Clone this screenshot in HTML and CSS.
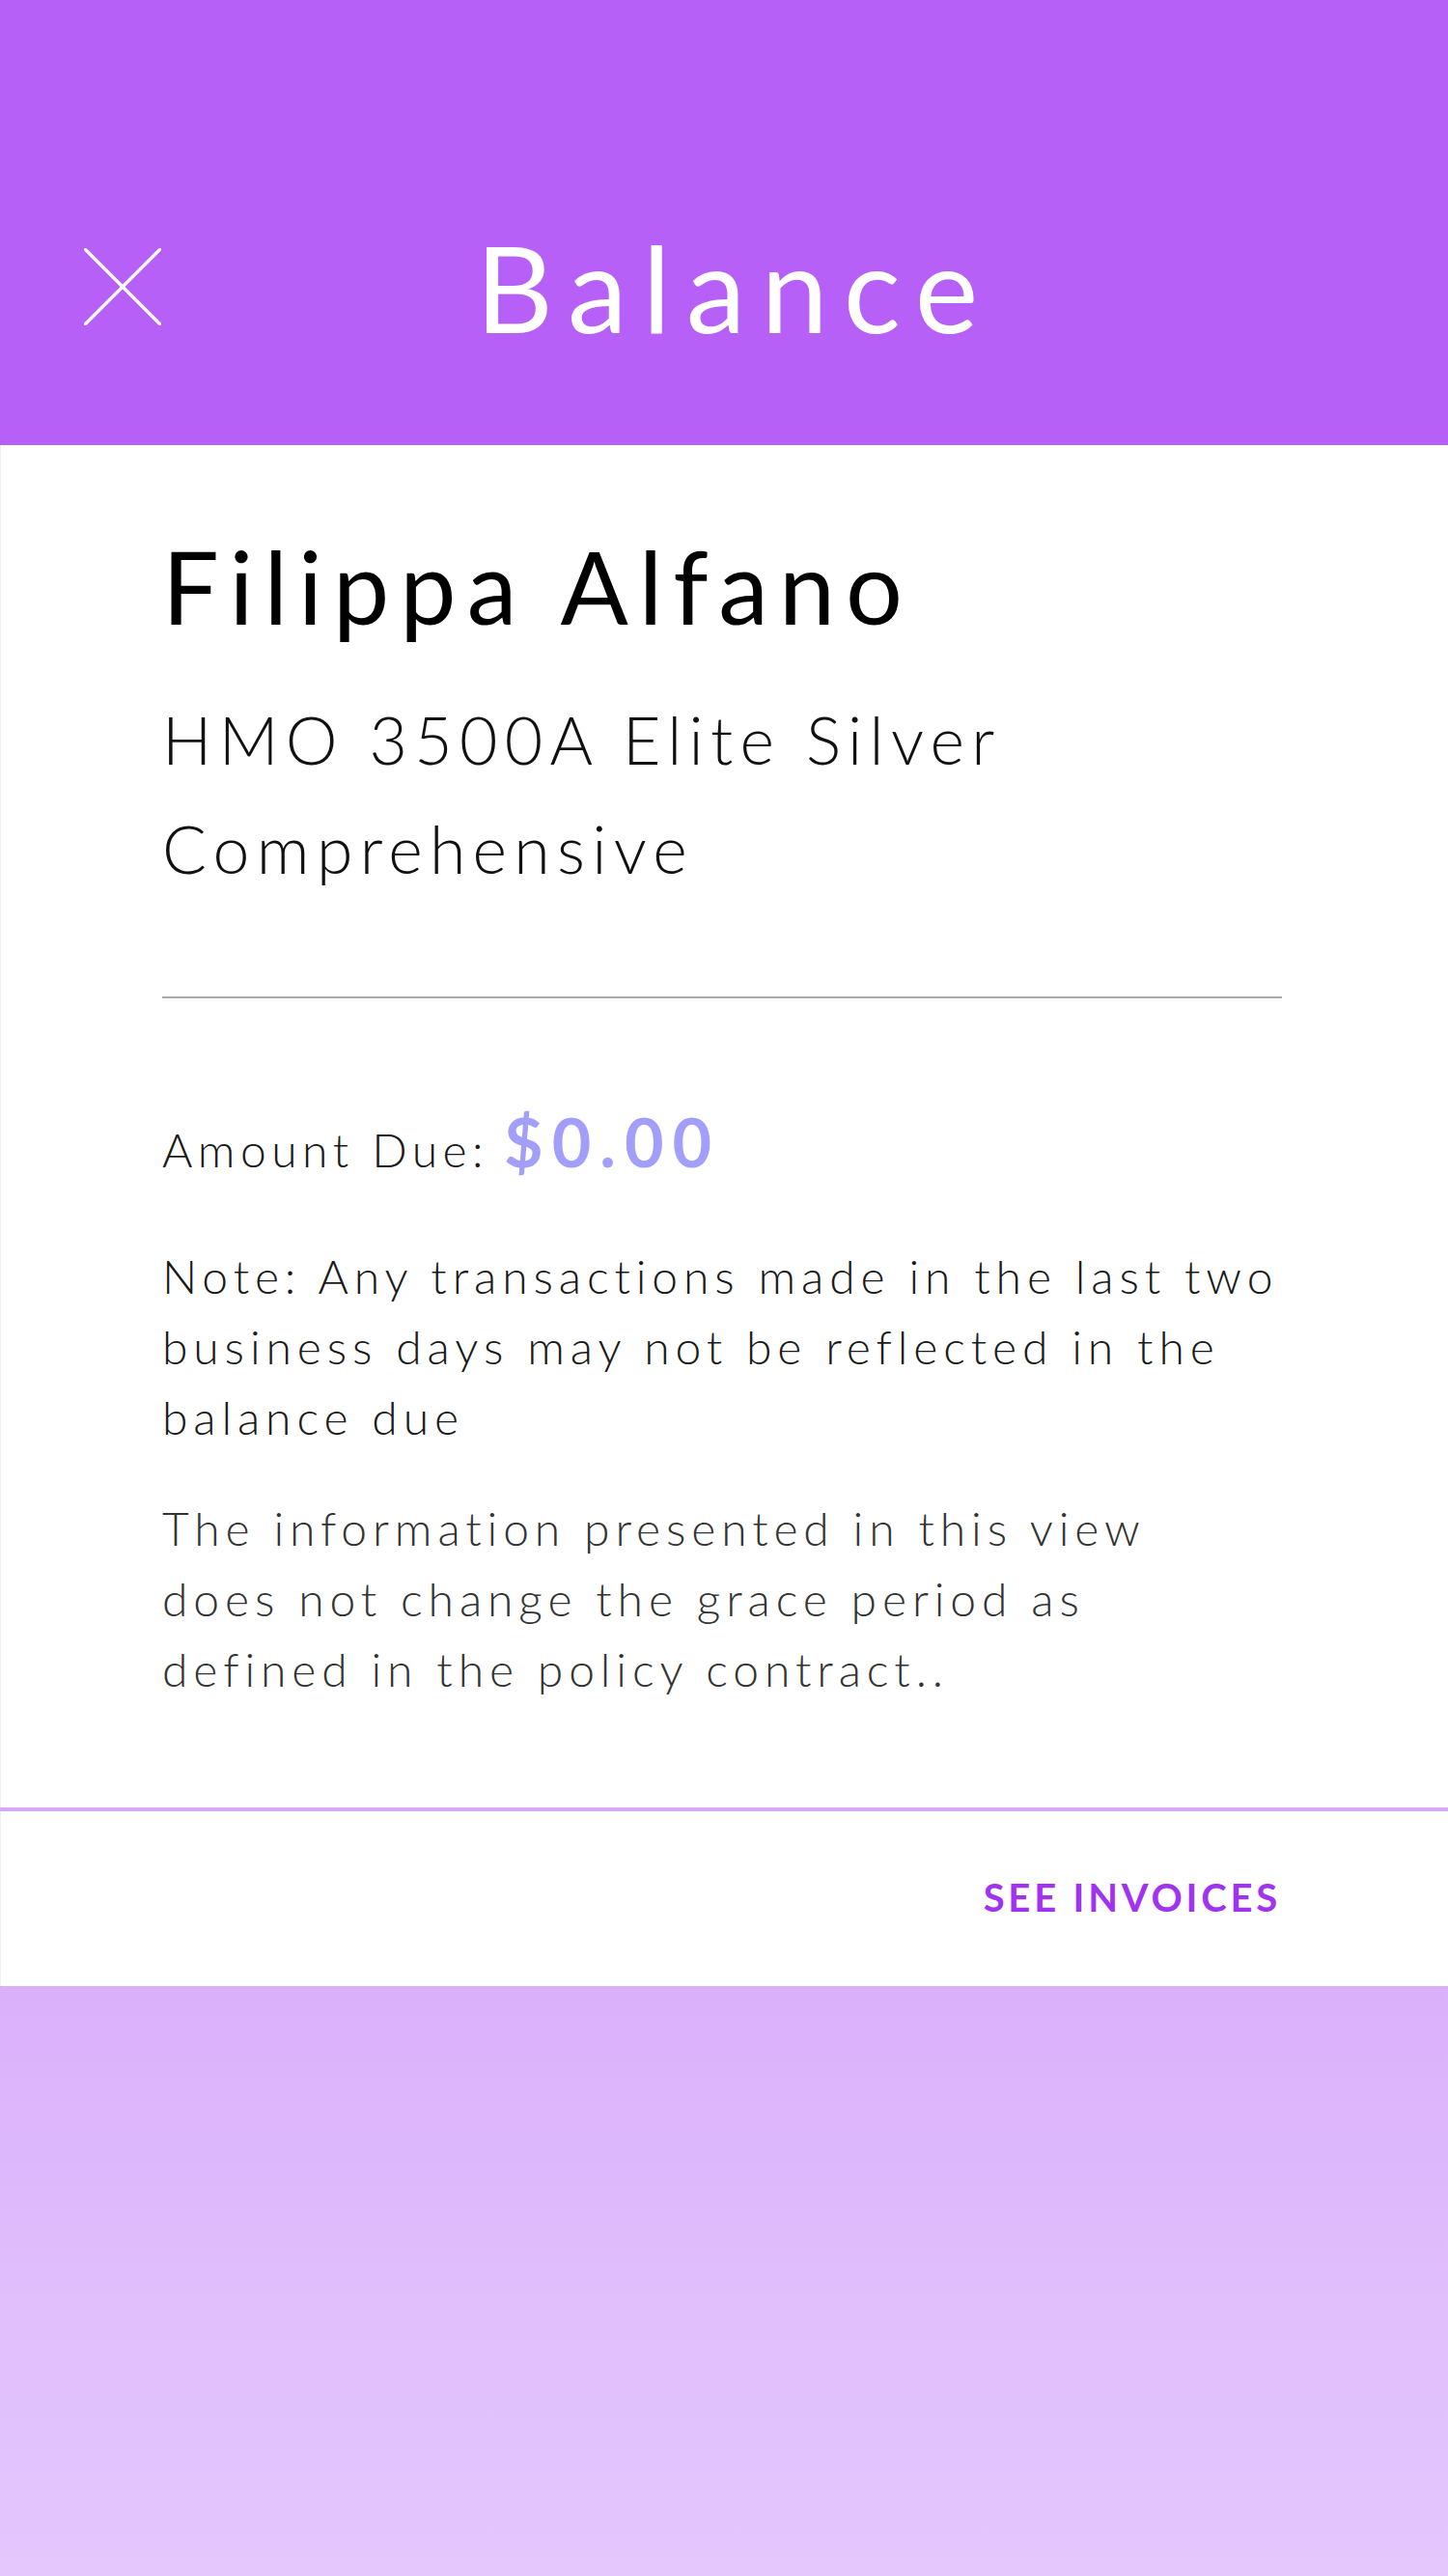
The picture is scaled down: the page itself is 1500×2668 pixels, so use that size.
FILE: index.html
```html
<!DOCTYPE html>
<html lang="en">
<head>
<meta charset="utf-8">
<title>Balance</title>
<link rel="stylesheet" href="styles.css">
</head>
<body>
<div class="screen">
  <header class="header">
    <div class="header-row">
      <button class="close" aria-label="Close">
        <svg width="80" height="80" viewBox="0 0 80 80" fill="none" stroke="#ffffff" stroke-width="3.2" stroke-linecap="round">
          <line x1="1.5" y1="1.5" x2="78.5" y2="78.5"/>
          <line x1="78.5" y1="1.5" x2="1.5" y2="78.5"/>
        </svg>
      </button>
      <h1 class="title">Balance</h1>
      <span class="spacer"></span>
    </div>
  </header>

  <main class="content">
    <h2 class="name">Filippa Alfano</h2>
    <p class="plan">HMO 3500A Elite Silver<br>Comprehensive</p>
    <hr class="divider">
    <div class="amount-row">
      <span class="amount-label">Amount Due:</span>
      <span class="amount-value">$0.00</span>
    </div>
    <p class="note">Note: Any transactions made in the last two<br>business days may not be reflected in the<br>balance due</p>
    <p class="info">The information presented in this view<br>does not change the grace period as<br>defined in the policy contract..</p>
  </main>

  <footer class="actions">
    <a class="see-invoices" href="#">SEE INVOICES</a>
  </footer>

  <div class="backdrop"></div>
</div>
</body>
</html>
```

FILE: styles.css
```css
* {
  box-sizing: border-box;
}

html, body {
  margin: 0;
  padding: 0;
}

body {
  width: 1500px;
  font-family: Lato, "Open Sans", "Liberation Sans", sans-serif;
  background: #ffffff;
}

.screen {
  display: flex;
  flex-direction: column;
  width: 1500px;
  min-height: 2668px;
}

.header {
  height: 461px;
  background: #b660f7;
  padding: 257px 87px 0 87px;
}

.header-row {
  display: grid;
  grid-template-columns: 1fr auto 1fr;
  align-items: center;
  height: 80px;
}

.close {
  width: 80px;
  height: 80px;
  padding: 0;
  margin: 0;
  border: 0;
  background: transparent;
  display: block;
}

.close svg {
  display: block;
}

.title {
  margin: 0;
  font-weight: 400;
  font-size: 124px;
  line-height: 80px;
  letter-spacing: 16px;
  color: #ffffff;
  text-align: center;
  padding-left: 22px;
}

.content {
  padding: 86px 172px 106px 168px;
  box-shadow: inset 1px 0 0 #efefef;
}

.name {
  margin: 0;
  font-weight: 400;
  font-size: 104px;
  line-height: 120px;
  letter-spacing: 11px;
  color: #000000;
}

.plan {
  margin: 42px 0 0 0;
  font-weight: 300;
  font-size: 68px;
  line-height: 113px;
  letter-spacing: 7.3px;
  color: #111111;
  white-space: nowrap;
}

.divider {
  margin: 97px 0 0 0;
  border: 0;
  height: 2px;
  background: #aaaaaa;
}

.amount-row {
  margin-top: 108px;
  display: flex;
  align-items: baseline;
  gap: 16px;
  height: 80px;
}

.amount-label {
  font-weight: 300;
  font-size: 48px;
  line-height: 60px;
  letter-spacing: 5.5px;
  color: #1a1a1a;
}

.amount-value {
  font-weight: 700;
  font-size: 70px;
  line-height: 80px;
  letter-spacing: 9px;
  color: #a29ffa;
}

.note,
.info {
  font-weight: 300;
  font-size: 48px;
  line-height: 73.3px;
  letter-spacing: 5.9px;
  white-space: nowrap;
}

.note {
  margin: 62.5px 0 0 0;
  color: #1a1a1a;
}

.info {
  margin: 41.4px 0 0 0;
  color: #333333;
}

.actions {
  height: 185px;
  border-top: 4px solid #d8a8f8;
  padding: 69.5px 173px 0 0;
  display: flex;
  justify-content: flex-end;
  box-shadow: inset 1px 0 0 #efefef;
}

.see-invoices {
  font-weight: 700;
  font-size: 40px;
  line-height: 40px;
  letter-spacing: 3.8px;
  color: #a032f0;
  text-decoration: none;
}

.backdrop {
  height: 611px;
  background: linear-gradient(180deg, #dab0fb 0%, #e0bdfc 50%, #e4c7fd 100%);
}
```
